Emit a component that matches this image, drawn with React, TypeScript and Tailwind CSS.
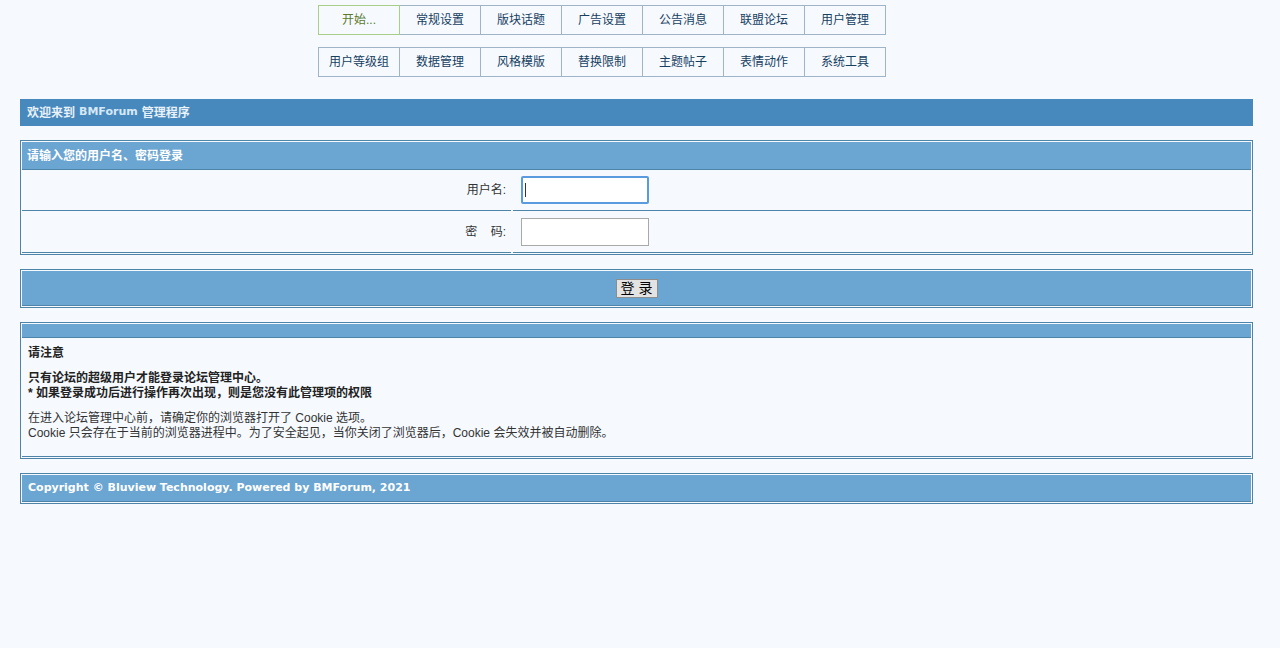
import React from 'react';

const navRow1 = ['开始...', '常规设置', '版块话题', '广告设置', '公告消息', '联盟论坛', '用户管理'];
const navRow2 = ['用户等级组', '数据管理', '风格模版', '替换限制', '主题帖子', '表情动作', '系统工具'];

const font = "font-['Liberation_Sans','Noto_Sans_CJK_SC',sans-serif]";

const NavRow = ({ items, first }: { items: string[]; first?: boolean }) => (
  <div className="flex pl-[318px]">
    {items.map((label, i) => (
      <div
        key={label}
        className={`flex h-[30px] items-center justify-center text-[12px] ${
          i === 0 ? 'w-[82px] border border-[#9fb4c6]' : 'w-[81px] border border-l-0 border-[#9fb4c6]'
        } ${first && i === 0 ? 'border-[#a9cf86] text-[#5b7a2c]' : 'text-[#17405f]'}`}
      >
        {label}
      </div>
    ))}
  </div>
);

const Panel = ({ children }: { children: React.ReactNode }) => (
  <div className="mx-[20px] w-[1233px] border border-[#4d84a8] p-px">{children}</div>
);

export default function App() {
  return (
    <div className={`min-h-[648px] bg-[#f6faff] pt-[5px] ${font}`}>
      <NavRow items={navRow1} first />
      <div className="h-[12px]" />
      <NavRow items={navRow2} />

      {/* welcome bar */}
      <div className="mx-[20px] mt-[22px] flex h-[27px] w-[1233px] items-center bg-[#4889bd] px-[7px] text-[12px] font-bold text-[#eaf2f9]">
        欢迎来到{' '}
        <span className="ml-1 mr-1 font-['DejaVu_Sans',sans-serif] text-[11px] text-[#d6e8f6]">BMForum</span>{' '}
        管理程序
      </div>

      {/* login */}
      <div className="mt-[14px]">
        <Panel>
          <div className="flex h-[28px] items-center border-b border-[#4d84a8] bg-[#6ba5d1] px-[5px] text-[12px] font-bold text-white">
            请输入您的用户名、密码登录
          </div>
          <div className="flex gap-[2px]">
            <div className="flex h-[41px] w-[489px] items-center justify-end border-b border-[#4d84a8] pr-[5px] text-[12px] text-[#333]">
              用户名:
            </div>
            <div className="flex h-[41px] flex-1 items-center border-b border-[#4d84a8] pl-[8px]">
              <div className="relative h-[28px] w-[128px] rounded-[2px] border-2 border-[#5a9be0] bg-white">
                <span className="absolute left-[2px] top-[5px] h-[14px] w-px bg-[#333]" />
              </div>
            </div>
          </div>
          <div className="flex gap-[2px]">
            <div className="flex h-[42px] w-[489px] items-center justify-end border-b border-[#4d84a8] pr-[5px] text-[12px] text-[#333]">
              密&nbsp;&nbsp;&nbsp;&nbsp;码:
            </div>
            <div className="flex h-[42px] flex-1 items-center border-b border-[#4d84a8] pl-[8px]">
              <input type="password" className="h-[28px] w-[128px] border border-[#a9a9a9] bg-white outline-none" />
            </div>
          </div>
        </Panel>
      </div>

      {/* submit */}
      <div className="mt-[14px]">
        <Panel>
          <div className="flex h-[35px] items-center justify-center border-b border-[#4d84a8] bg-[#6ba5d1]">
            <button className="h-[19px] w-[42px] border border-[#8d8d8d] bg-[#e3e3e3] text-[14px] leading-none text-black">
              登 录
            </button>
          </div>
        </Panel>
      </div>

      {/* notice */}
      <div className="mt-[14px]">
        <Panel>
          <div className="h-[14px] border-b border-[#4d84a8] bg-[#6ba5d1]" />
          <div className="border-b border-[#4d84a8] px-[6px] pb-[15px] pt-[7px] text-[12px] text-[#222]">
            <div className="font-bold leading-[16px]">请注意</div>
            <div className="mt-[10px] font-bold leading-[15px]">
              只有论坛的超级用户才能登录论坛管理中心。
              <br />* 如果登录成功后进行操作再次出现，则是您没有此管理项的权限
            </div>
            <div className="mt-[10px] leading-[15px] text-[#333]">
              在进入论坛管理中心前，请确定你的浏览器打开了 Cookie 选项。
              <br />
              Cookie 只会存在于当前的浏览器进程中。为了安全起见，当你关闭了浏览器后，Cookie 会失效并被自动删除。
            </div>
          </div>
        </Panel>
      </div>

      {/* footer */}
      <div className="mt-[14px]">
        <Panel>
          <div className="flex h-[27px] items-center border-b border-[#4d84a8] bg-[#6ba5d1] px-[6px] font-['DejaVu_Sans',sans-serif] text-[11px] font-bold text-white">
            Copyright © Bluview Technology. Powered by BMForum, 2021
          </div>
        </Panel>
      </div>
    </div>
  );
}
